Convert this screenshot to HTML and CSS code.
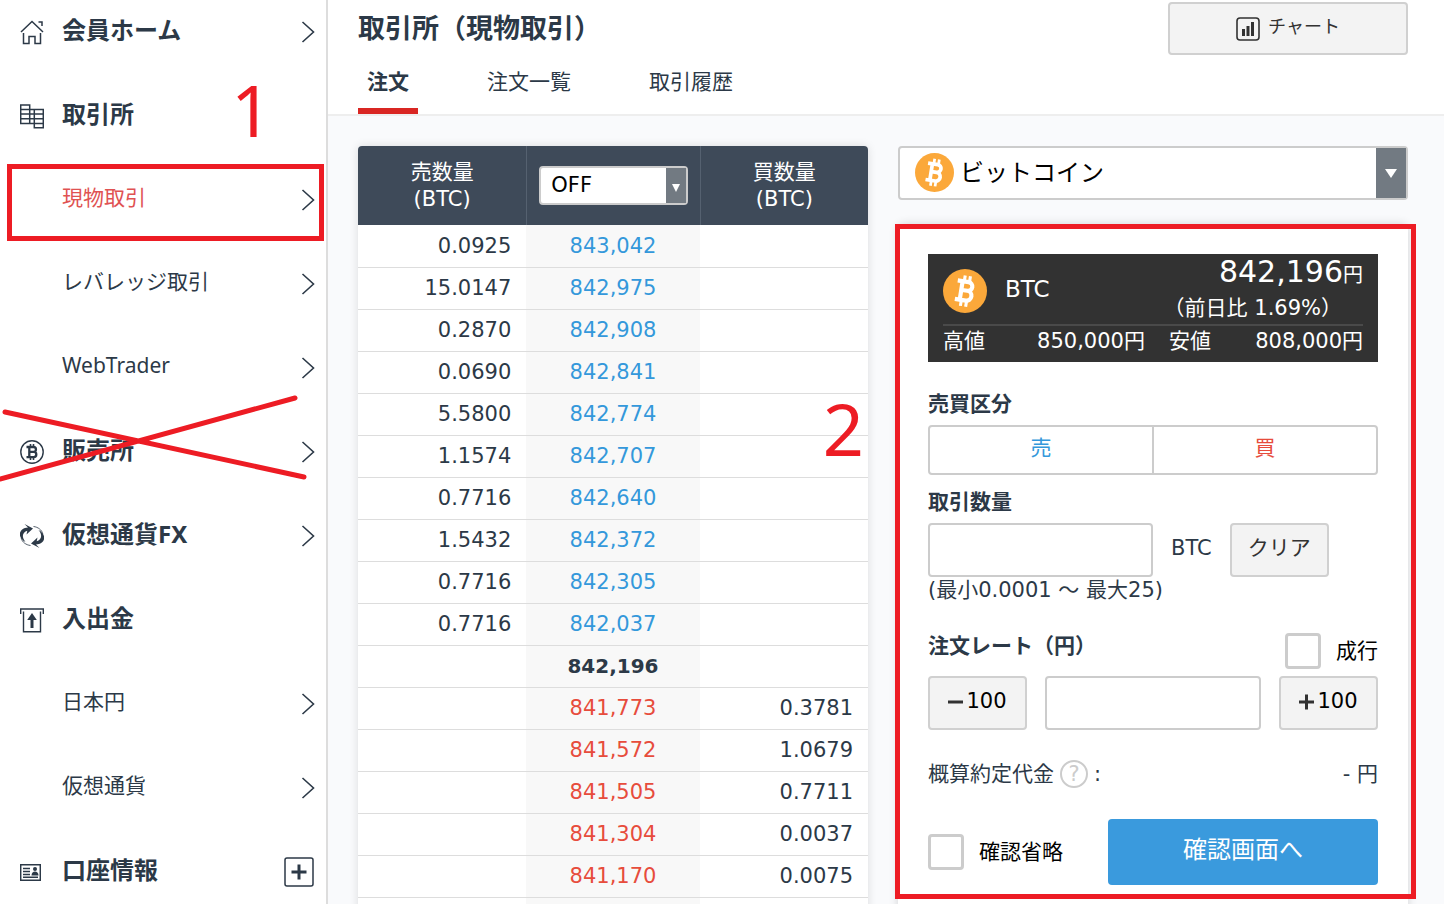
FILE: index.html
```html
<!DOCTYPE html>
<html lang="ja">
<head>
<meta charset="utf-8">
<meta name="viewport" content="width=device-width, initial-scale=1">
<title>取引所（現物取引）</title>
<link rel="stylesheet" href="styles.css">
</head>
<body>
<svg class="defs" aria-hidden="true">
  <symbol id="chevron" viewBox="0 0 14 24"><path d="M1.500 2 12.500 12 1.500 22" fill="none" stroke="currentColor" stroke-width="1.6"/></symbol>
  <symbol id="btc-mark" viewBox="0 0 40 40"><g transform="rotate(9 20 20)" fill="none" stroke="currentColor"><path d="M16.500 11.500v17M12 11.500h10a4 4 0 0 1 0 8H17M22 19.500a4.500 4.500 0 0 1 0 9H12" stroke-width="3.800"/><path d="M18 6V12M22.800 6V12M18 28v6M22.800 28v6" stroke-width="2.800"/></g></symbol>
  <symbol id="btc-coin" viewBox="0 0 40 40"><circle cx="20" cy="20" r="20" fill="#fba83a"/><use href="#btc-mark" color="#fff"/></symbol>
  <symbol id="swirl" viewBox="0 0 24 24"><path d="M4.500 0 13 4.500 6.500 10.500 7.300 6.800C3 8 .8 12.500 5.500 18-1 14.500-1.800 8.500 2.500 5.200 4 4 5.800 3.600 8 3.400z" fill="currentColor"/><path d="M13.500 2.500C18 3 22 6 22.800 10" fill="none" stroke="currentColor" stroke-width=".8"/></symbol>
</svg>
<div class="app">
  <nav class="sidebar" aria-label="メニュー">
    <ul class="menu">
      <li class="menu-item"><a class="menu-link group" href="#"><span class="menu-icon"><svg width="24" height="26" viewBox="0 0 24 26" fill="none" stroke="currentColor" stroke-width="1.5"><path d="M1 13 12 2.500 23 13M3.500 14v10.500H9V17.500h6v7h5.500V14M18.500 3H22v4"/></svg></span><span class="menu-label">会員ホーム</span><svg class="chevron"><use href="#chevron"/></svg></a></li>
      <li class="menu-item"><a class="menu-link group" href="#"><span class="menu-icon"><svg width="24" height="25" viewBox="0 0 24 25" fill="none" stroke="currentColor" stroke-width="1.500"><path d="M.7 1h9v18.500h-9zM.7 5.500h13.500M.7 10h22.600M.7 14.700h22.600M9.700 5.500h13.600v18.300h-9V5.500M9.700 19.500h13.600M9.700 1v18.500"/></svg></span><span class="menu-label">取引所</span></a><span class="mark mark-one">1</span></li>
      <li class="menu-item framed"><a class="menu-link current" href="#"><span class="menu-icon"></span><span class="menu-label">現物取引</span><svg class="chevron"><use href="#chevron"/></svg></a></li>
      <li class="menu-item"><a class="menu-link" href="#"><span class="menu-icon"></span><span class="menu-label">レバレッジ取引</span><svg class="chevron"><use href="#chevron"/></svg></a></li>
      <li class="menu-item"><a class="menu-link" href="#"><span class="menu-icon"></span><span class="menu-label">WebTrader</span><svg class="chevron"><use href="#chevron"/></svg></a></li>
      <li class="menu-item"><a class="menu-link group" href="#"><span class="menu-icon"><svg width="24" height="24" viewBox="0 0 24 24"><circle cx="12" cy="12" r="11.200" fill="none" stroke="currentColor" stroke-width="1.400"/><g fill="none" stroke="currentColor"><path d="M6.500 7h7a2.400 2.400 0 0 1 0 4.900H9.500M13.700 11.900a2.600 2.600 0 0 1 0 5.200H6.500M9.300 7v10" stroke-width="2.300"/><path d="M10.500 4v3M13.500 4v3M10.500 17v3M13.500 17v3" stroke-width="1.600"/></g></svg></span><span class="menu-label">販売所</span><svg class="chevron"><use href="#chevron"/></svg></a>
        <svg class="cross" width="310" height="90" viewBox="0 0 310 90" aria-hidden="true"><path d="M5 18 304 83M0 85 295 4" stroke="#ed1c24" stroke-width="5" stroke-linecap="round"/></svg></li>
      <li class="menu-item"><a class="menu-link group" href="#"><span class="menu-icon"><svg width="24" height="24" viewBox="0 0 24 24"><use href="#swirl"/><use href="#swirl" transform="rotate(180 12 12)"/></svg></span><span class="menu-label">仮想通貨FX</span><svg class="chevron"><use href="#chevron"/></svg></a></li>
      <li class="menu-item"><a class="menu-link group" href="#"><span class="menu-icon"><svg width="24" height="25" viewBox="0 0 24 25" fill="none" stroke="currentColor" stroke-width="1.400"><path d="M.7 6V1h22.600v5M3.500 3.500v20.300h17V3.500"/><path d="M12 20v-8" stroke-width="3"/><path d="m12 5 4.800 7H7.200z" fill="currentColor" stroke="none"/></svg></span><span class="menu-label">入出金</span></a></li>
      <li class="menu-item"><a class="menu-link" href="#"><span class="menu-icon"></span><span class="menu-label">日本円</span><svg class="chevron"><use href="#chevron"/></svg></a></li>
      <li class="menu-item"><a class="menu-link" href="#"><span class="menu-icon"></span><span class="menu-label">仮想通貨</span><svg class="chevron"><use href="#chevron"/></svg></a></li>
      <li class="menu-item"><a class="menu-link group" href="#"><span class="menu-icon"><svg width="21" height="17" viewBox="0 0 21 17" fill="none" stroke="currentColor" stroke-width="1.500"><path d="M.7.7h19.600v15.600H.7zM3 4.500h7M3 7.500h7M3 10.500h7M3 13.300h15"/><circle cx="15" cy="5" r="2" fill="currentColor" stroke="none"/><path d="M11.500 11.500c0-5.500 7-5.500 7 0z" fill="currentColor" stroke="none"/></svg></span><span class="menu-label">口座情報</span><svg class="expand" viewBox="0 0 30 30" fill="none" stroke="currentColor"><rect x="1" y="1" width="28" height="28" rx="2" stroke-width="1.500"/><path d="M7.500 15h15M15 7.500v15" stroke-width="3"/></svg></a></li>
    </ul>
  </nav>
  <main class="main">
    <header class="page-head">
      <div class="title-row">
        <h1 class="title">取引所（現物取引）</h1>
        <button class="btn chart-btn" type="button"><svg width="24" height="24" viewBox="0 0 24 24" fill="none" stroke="currentColor"><rect x="1" y="1" width="22" height="22" rx="3" stroke-width="1.600"/><path d="M7.500 19v-7M12 19V9M16.500 19V5" stroke-width="3"/></svg><span>チャート</span></button>
      </div>
      <div class="tabs">
        <a class="tab active" href="#" aria-current="page">注文</a>
        <a class="tab" href="#">注文一覧</a>
        <a class="tab" href="#">取引履歴</a>
      </div>
    </header>
    <div class="columns">
      <section class="board">
        <table class="book">
          <thead>
            <tr>
              <th scope="col">売数量<br>(BTC)</th>
              <th scope="col" class="mid"><div class="select-box small"><select aria-label="集約単位"><option>OFF</option></select><span class="arrow"></span></div></th>
              <th scope="col">買数量<br>(BTC)</th>
            </tr>
          </thead>
          <tbody>
            <tr><td>0.0925</td><td class="mid sell">843,042</td><td></td></tr>
            <tr><td>15.0147</td><td class="mid sell">842,975</td><td></td></tr>
            <tr><td>0.2870</td><td class="mid sell">842,908</td><td></td></tr>
            <tr><td>0.0690</td><td class="mid sell">842,841</td><td></td></tr>
            <tr><td>5.5800</td><td class="mid sell">842,774</td><td></td></tr>
            <tr><td>1.1574</td><td class="mid sell">842,707</td><td></td></tr>
            <tr><td>0.7716</td><td class="mid sell">842,640</td><td></td></tr>
            <tr><td>1.5432</td><td class="mid sell">842,372</td><td></td></tr>
            <tr><td>0.7716</td><td class="mid sell">842,305</td><td></td></tr>
            <tr><td>0.7716</td><td class="mid sell">842,037</td><td></td></tr>
            <tr><td></td><td class="mid last">842,196</td><td></td></tr>
            <tr><td></td><td class="mid buy">841,773</td><td>0.3781</td></tr>
            <tr><td></td><td class="mid buy">841,572</td><td>1.0679</td></tr>
            <tr><td></td><td class="mid buy">841,505</td><td>0.7711</td></tr>
            <tr><td></td><td class="mid buy">841,304</td><td>0.0037</td></tr>
            <tr><td></td><td class="mid buy">841,170</td><td>0.0075</td></tr>
            <tr><td></td><td class="mid"></td><td></td></tr>
          </tbody>
        </table>
        <span class="mark mark-two">2</span>
      </section>
      <section class="order">
        <div class="select-box coin-select">
          <svg class="coin-icon"><use href="#btc-coin"/></svg>
          <select aria-label="通貨"><option>ビットコイン</option></select><span class="arrow"></span>
        </div>
        <div class="card">
          <form class="form">
            <div class="price-box">
              <div class="price-top">
                <svg class="price-icon"><use href="#btc-coin"/></svg>
                <span class="symbol">BTC</span>
                <div class="quote">
                  <div class="quote-price">842,196<span class="yen">円</span></div>
                  <div class="change">（前日比 1.69%）</div>
                </div>
              </div>
              <div class="range">
                <div class="range-item"><span>高値</span><span>850,000円</span></div>
                <div class="range-item"><span>安値</span><span>808,000円</span></div>
              </div>
            </div>
            <h2 class="field-title">売買区分</h2>
            <div class="side-toggle">
              <button type="button" class="sell">売</button>
              <button type="button" class="buy">買</button>
            </div>
            <label class="field-title amount-title" for="amount">取引数量</label>
            <div class="amount-row">
              <input class="text-input" id="amount" type="text">
              <span class="unit">BTC</span>
              <button class="btn small-btn clear-btn" type="button">クリア</button>
            </div>
            <p class="hint">(最小0.0001 〜 最大25)</p>
            <div class="rate-head">
              <label class="field-title" for="rate">注文レート（円）</label>
              <label class="check"><input type="checkbox">成行</label>
            </div>
            <div class="rate-row">
              <button class="btn small-btn step" type="button"><svg width="15" height="16" viewBox="0 0 15 16"><path d="M0 9h15" stroke="#323232" stroke-width="3"/></svg>100</button>
              <input class="text-input" id="rate" type="text">
              <button class="btn small-btn step" type="button"><svg width="15" height="17" viewBox="0 0 15 17"><path d="M0 9h15M7.500 1.500v15" stroke="#323232" stroke-width="3"/></svg>100</button>
            </div>
            <div class="estimate">
              <span>概算約定代金</span><button class="help" type="button" aria-label="ヘルプ">?</button><span>:</span>
              <span class="estimate-value">- 円</span>
            </div>
            <div class="submit-row">
              <label class="check"><input type="checkbox">確認省略</label>
              <button class="submit" type="submit">確認画面へ</button>
            </div>
          </form>
        </div>
      </section>
    </div>
  </main>
</div>
</body>
</html>
```
FILE: styles.css
```css
* { box-sizing: border-box; }

body {
  margin: 0;
  height: 100vh;
  overflow: hidden;
  color: #2c3947;
  background: #f9fafc;
  font: 21px/27px "DejaVu Sans", "Noto Sans CJK JP", sans-serif;
}

button, input, select { font: inherit; color: inherit; }
button { cursor: pointer; }
a { color: inherit; text-decoration: none; }
svg { flex: none; }
.defs { position: absolute; width: 0; height: 0; }

.app { display: flex; align-items: stretch; min-height: 100vh; }

/* Sidebar */
.sidebar {
  flex: none;
  width: 328px;
  background: #fff;
  border-right: 2px solid #ddd;
  font-family: "Noto Sans", "Noto Sans CJK JP", sans-serif;
}
.menu { list-style: none; margin: -10px 0 0; padding: 0; }
.menu-item { position: relative; height: 84px; }
.menu-link {
  display: flex;
  align-items: center;
  height: 100%;
  padding: 0 11px 0 20px;
}
.menu-icon { display: flex; width: 42px; }
.menu-label { flex: 1; padding-bottom: 6px; }
.group .menu-label { font-size: 24px; font-weight: 700; }
.current .menu-label { color: #e05252; }
.chevron { width: 14px; height: 24px; }
.expand { width: 30px; height: 30px; margin-right: 1px; }

/* Red annotations */
.mark {
  position: absolute;
  color: #ed1c24;
  font: 72px/72px "Noto Sans", sans-serif;
}
.mark-one { left: 231px; top: -1px; }
.mark-two { right: 4px; top: 246px; }
.framed::after {
  content: "";
  position: absolute;
  inset: 6px 2px 1px 7px;
  border: 5px solid #ed1c24;
  pointer-events: none;
}
.cross { position: absolute; left: 0; top: -16px; pointer-events: none; }

/* Header */
.main { flex: 1; min-width: 0; }
.page-head {
  background: #fff;
  border-bottom: 2px solid #eee;
  padding: 2px 36px 0 30px;
}
.title-row { display: flex; justify-content: space-between; align-items: center; }
.title { margin: 0; font-size: 27px; line-height: 32px; }
.btn {
  display: flex;
  align-items: center;
  justify-content: center;
  border: 2px solid #d0d0d0;
  border-radius: 4px;
  background: #f3f3f3;
  color: #323232;
  padding: 0;
}
.chart-btn { width: 240px; height: 53px; gap: 8px; font-size: 18px; }
.chart-btn span { padding-bottom: 4px; }
.tabs { display: flex; gap: 60px; }
.tab { height: 59px; padding: 14px 9px 0; border-bottom: 6px solid transparent; }
.tab.active { border-color: #d92623; font-weight: 700; }

.columns {
  display: grid;
  grid-template-columns: repeat(2, minmax(0, 1fr));
  gap: 30px;
  padding: 30px 36px 0 30px;
}

/* Order book */
.board { position: relative; }
.book {
  width: 100%;
  table-layout: fixed;
  border-collapse: separate;
  border-spacing: 0;
  border-radius: 4px;
  overflow: hidden;
  background: #fff;
  box-shadow: 0 0 10px rgba(0, 0, 0, .12);
}
.book th {
  width: 33%;
  height: 79px;
  padding: 0;
  background: #3e4a59;
  color: #fff;
  font-weight: 400;
}
.book th + th { border-left: 1px solid #556170; }
.book th.mid { width: 34%; padding: 0 12px; }
.book td { height: 42px; padding: 0 15px 1px 0; text-align: right; line-height: 24px; }
.book tr + tr td { border-top: 1px solid #ddd; }
.book td.mid { padding-right: 0; background: #f8f8f8; text-align: center; }
.book td.last { font-size: 20px; font-weight: 700; }
.sell { color: #3498db; }
.buy { color: #e74c3c; }

.select-box {
  position: relative;
  background: #fff;
  border: 2px solid #ccc;
  border-radius: 4px;
}
.select-box select {
  appearance: none;
  display: block;
  width: 100%;
  height: 100%;
  border: 0;
  background: transparent;
  color: #000;
}
.small { height: 39px; }
.small select { padding: 0 24px 0 10px; }
.arrow {
  position: absolute;
  inset: 0 0 0 auto;
  width: 20px;
  display: grid;
  place-items: center;
  background: #727a82;
  pointer-events: none;
}
.arrow::before {
  content: "";
  margin-top: 4px;
  border: 4px solid transparent;
  border-top: 8px solid #fff;
  border-bottom: 0;
}

/* Order panel */
.coin-select { height: 54px; font-size: 24px; }
.coin-select select { padding: 0 40px 0 60px; }
.coin-select .arrow { width: 30px; }
.coin-select .arrow::before { border-width: 9px 6px 0; margin: 0; }
.coin-icon { position: absolute; left: 15px; top: 5px; width: 39px; height: 39px; }
.card {
  margin-top: 24px;
  min-height: 720px;
  padding: 30px;
  background: #fff;
  border-radius: 6px;
  box-shadow: 0 0 10px rgba(0, 0, 0, .16);
}
.form { position: relative; }
.form::after {
  content: "";
  position: absolute;
  inset: -30px -38px -14px -33px;
  border: 5px solid #ed1c24;
  pointer-events: none;
}

.price-box { height: 108px; padding: 0 15px; background: #323232; color: #fff; }
.price-top { display: flex; align-items: center; height: 72px; border-bottom: 2px solid #4a4a4a; }
.price-icon { width: 44px; height: 44px; margin-top: 4px; }
.symbol { margin-left: 18px; font-size: 23px; }
.quote { margin-left: auto; text-align: right; }
.quote-price { font-size: 30px; line-height: 38px; }
.yen { font-size: 20px; }
.change { padding: 0 21px 4px 0; line-height: 28px; }
.range { display: grid; grid-template-columns: 51fr 49fr; gap: 24px; line-height: 30px; }
.range-item { display: flex; justify-content: space-between; }

.field-title { display: block; margin: 0; font-size: 21px; font-weight: 700; line-height: 27px; }
h2.field-title { margin: 29px 0 7px; }
.side-toggle { display: flex; height: 50px; border: 2px solid #ccc; border-radius: 4px; }
.side-toggle button { flex: 1; border: 0; padding: 0 0 4px; background: none; }
.side-toggle button + button { border-left: 2px solid #ccc; }
.amount-title { margin: 14px 0 7px; }
.amount-row, .rate-row { display: flex; align-items: center; gap: 18px; }
.text-input {
  height: 54px;
  min-width: 0;
  padding: 0 12px;
  background: #fff;
  border: 2px solid #ccc;
  border-radius: 4px;
}
.amount-row .text-input { width: 50%; }
.unit { padding-bottom: 4px; }
.small-btn { width: 99px; height: 54px; padding-bottom: 4px; }
.hint { margin: 0; }
.rate-head { display: flex; justify-content: space-between; margin: 29px 0 7px; }
.check { display: flex; align-items: center; gap: 15px; color: #000; }
.check input {
  appearance: none;
  width: 36px;
  height: 36px;
  margin: 0;
  background: #fff;
  border: 3px solid #ccc;
  border-radius: 4px;
}
.rate-row .text-input { flex: 1; }
.step { gap: 3px; color: #000; }
.estimate { display: flex; align-items: center; gap: 6px; margin-top: 30px; }
.help {
  width: 28px;
  height: 28px;
  padding: 0;
  border: 2px solid #ccc;
  border-radius: 50%;
  background: none;
  color: #ccc;
  line-height: 22px;
}
.estimate-value { margin-left: auto; }
.submit-row { display: flex; justify-content: space-between; align-items: center; margin-top: 31px; }
.submit {
  width: 60%;
  height: 66px;
  padding: 0 0 4px;
  border: 0;
  border-radius: 4px;
  background: #3a9add;
  color: #fff;
  font-size: 24px;
}
```
